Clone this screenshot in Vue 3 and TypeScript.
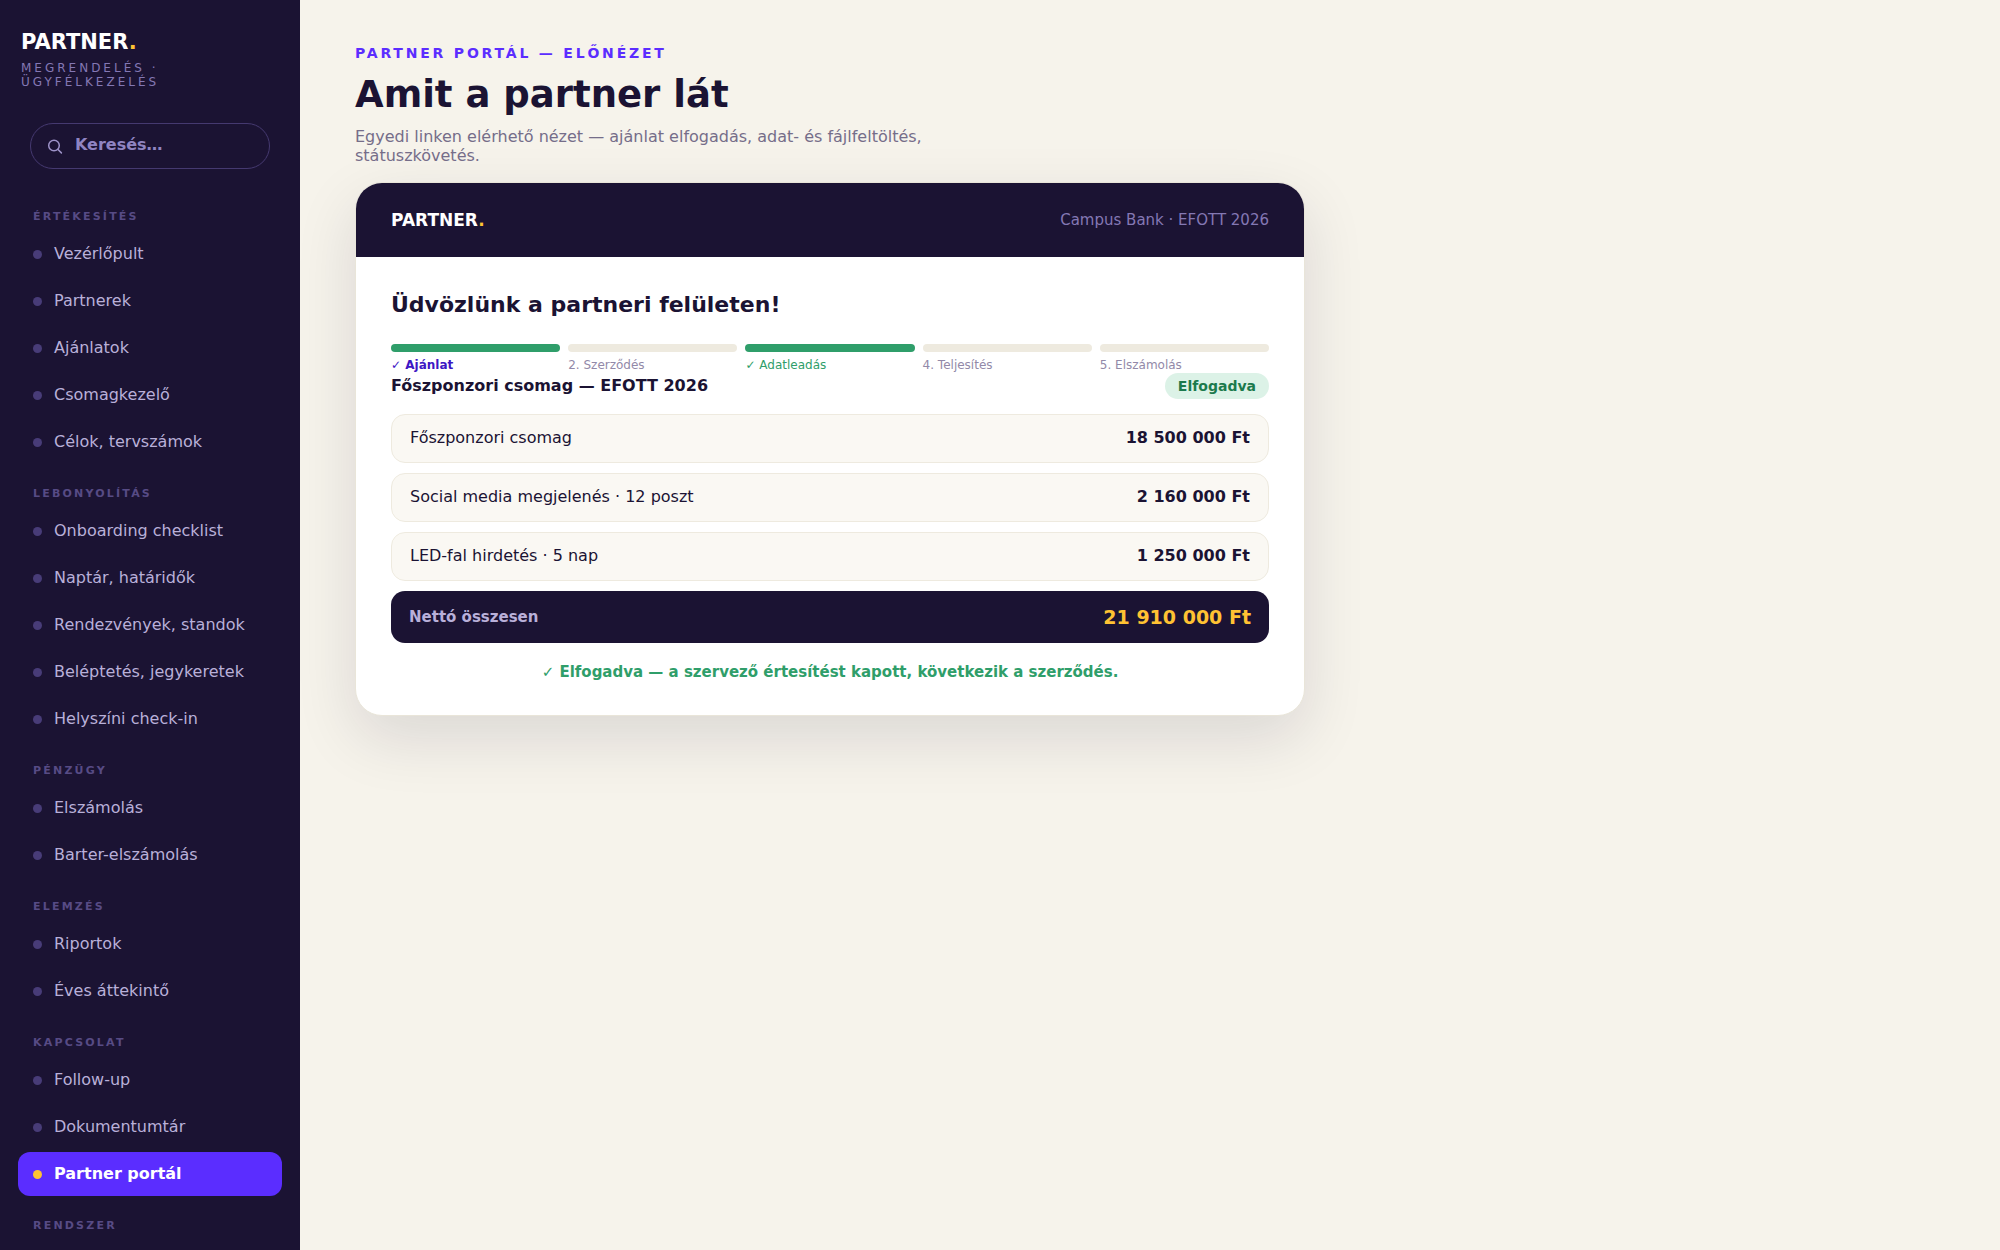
<script setup lang="ts">
interface NavGroup {
  label: string
  items: string[]
}

interface Step {
  label: string
  state: 'done' | 'current' | 'todo'
}

interface OfferLine {
  name: string
  price: string
}

const activeItem = 'Partner portál'

const groups: NavGroup[] = [
  { label: 'Értékesítés', items: ['Vezérlőpult', 'Partnerek', 'Ajánlatok', 'Csomagkezelő', 'Célok, tervszámok'] },
  {
    label: 'Lebonyolítás',
    items: ['Onboarding checklist', 'Naptár, határidők', 'Rendezvények, standok', 'Beléptetés, jegykeretek', 'Helyszíni check-in'],
  },
  { label: 'Pénzügy', items: ['Elszámolás', 'Barter-elszámolás'] },
  { label: 'Elemzés', items: ['Riportok', 'Éves áttekintő'] },
  { label: 'Kapcsolat', items: ['Follow-up', 'Dokumentumtár', 'Partner portál'] },
  { label: 'Rendszer', items: [] },
]

const steps: Step[] = [
  { label: '✓ Ajánlat', state: 'current' },
  { label: '2. Szerződés', state: 'todo' },
  { label: '✓ Adatleadás', state: 'done' },
  { label: '4. Teljesítés', state: 'todo' },
  { label: '5. Elszámolás', state: 'todo' },
]

const lines: OfferLine[] = [
  { name: 'Főszponzori csomag', price: '18 500 000 Ft' },
  { name: 'Social media megjelenés · 12 poszt', price: '2 160 000 Ft' },
  { name: 'LED-fal hirdetés · 5 nap', price: '1 250 000 Ft' },
]
</script>

<template>
  <div class="app">
    <aside class="sidebar">
      <div class="brand">
        <div class="brand-name">PARTNER<span class="dot">.</span></div>
        <div class="brand-sub">Megrendelés · Ügyfélkezelés</div>
      </div>

      <label class="search">
        <svg class="search-icon" viewBox="0 0 16 16" fill="none" aria-hidden="true">
          <circle cx="7" cy="7.5" r="5.3" stroke="currentColor" stroke-width="1.5" />
          <path d="M11 11.5l3.4 3.4" stroke="currentColor" stroke-width="1.5" stroke-linecap="round" />
        </svg>
        <input class="search-input" type="text" placeholder="Keresés…" aria-label="Keresés" />
      </label>

      <nav class="nav">
        <section v-for="group in groups" :key="group.label" class="group">
          <h2 class="group-label">{{ group.label }}</h2>
          <ul v-if="group.items.length" class="items">
            <li v-for="item in group.items" :key="item">
              <a href="#" class="item" :class="{ active: item === activeItem }">
                <span class="bullet"></span>{{ item }}
              </a>
            </li>
          </ul>
        </section>
      </nav>
    </aside>

    <main class="main">
      <header class="page-head">
        <p class="eyebrow">Partner portál — előnézet</p>
        <h1 class="title">Amit a partner lát</h1>
        <p class="lead">Egyedi linken elérhető nézet — ajánlat elfogadás, adat- és fájlfeltöltés, státuszkövetés.</p>
      </header>

      <article class="card">
        <header class="card-head">
          <div class="card-brand">PARTNER<span class="dot">.</span></div>
          <div class="card-client">Campus Bank · EFOTT 2026</div>
        </header>

        <div class="card-body">
          <h2 class="welcome">Üdvözlünk a partneri felületen!</h2>

          <ol class="steps">
            <li v-for="step in steps" :key="step.label" class="step" :class="step.state">{{ step.label }}</li>
          </ol>

          <div class="offer-head">
            <h3 class="offer-title">Főszponzori csomag — EFOTT 2026</h3>
            <span class="badge">Elfogadva</span>
          </div>

          <ul class="lines">
            <li v-for="line in lines" :key="line.name" class="line">
              <span>{{ line.name }}</span>
              <strong>{{ line.price }}</strong>
            </li>
          </ul>

          <div class="total">
            <span class="total-label">Nettó összesen</span>
            <strong class="total-value">21 910 000 Ft</strong>
          </div>

          <p class="note">✓ Elfogadva — a szervező értesítést kapott, következik a szerződés.</p>
        </div>
      </article>
    </main>
  </div>
</template>

<style>
body {
  margin: 0;
  background: #f6f3eb;
}
</style>

<style scoped>
.app {
  display: flex;
  min-height: 100vh;
  font-family: "DejaVu Sans", sans-serif;
  font-size: 16px;
  line-height: 20px;
  color: #1b1333;
}

h1, h2, h3, p, ul, ol {
  margin: 0;
  padding: 0;
}

ul, ol {
  list-style: none;
}

.dot {
  color: #ffc233;
}

.sidebar {
  box-sizing: border-box;
  flex: none;
  width: 300px;
  padding: 28px 18px 0;
  background: #1b1333;
}

.brand {
  padding: 0 3px;
}

.brand-name {
  font-size: 21px;
  line-height: 28px;
  font-weight: 700;
  color: #ffffff;
}

.brand-sub {
  margin-top: 5px;
  font-size: 12px;
  line-height: 14px;
  letter-spacing: 3px;
  text-transform: uppercase;
  color: #8478b4;
}

.search {
  display: flex;
  align-items: center;
  gap: 12px;
  box-sizing: border-box;
  height: 46px;
  margin: 34px 12px 0;
  padding: 0 16px;
  border: 1px solid #453970;
  border-radius: 23px;
  color: #9d92c8;
}

.search-icon {
  flex: none;
  width: 16px;
  height: 16px;
}

.search-input {
  flex: 1;
  min-width: 0;
  padding: 0 0 2px;
  border: 0;
  outline: 0;
  background: none;
  font: inherit;
  font-weight: 700;
  color: inherit;
}

.search-input::placeholder {
  color: #8f84c2;
  opacity: 1;
}

.nav {
  margin-top: 40px;
}

.group-label {
  padding: 0 15px;
  font-size: 11px;
  line-height: 16px;
  font-weight: 700;
  letter-spacing: 0.2em;
  text-transform: uppercase;
  color: #574b85;
}

.items {
  display: flex;
  flex-direction: column;
  gap: 3px;
  padding: 7px 0 22px;
}

.item {
  display: flex;
  align-items: center;
  gap: 12px;
  padding: 12px 15px;
  border-radius: 12px;
  color: #b9b0d9;
  text-decoration: none;
}

.bullet {
  width: 9px;
  height: 9px;
  border-radius: 50%;
  background: #483c78;
}

.item.active {
  background: #5b2dff;
  color: #ffffff;
  font-weight: 700;
}

.item.active .bullet {
  background: #ffc233;
}

.main {
  flex: 1;
  min-width: 0;
  padding: 43px 55px;
}

.page-head {
  max-width: 600px;
}

.eyebrow {
  font-size: 14px;
  line-height: 20px;
  font-weight: 700;
  letter-spacing: 0.2em;
  text-transform: uppercase;
  color: #5b2dff;
}

.title {
  margin-top: 10px;
  font-size: 37px;
  line-height: 44px;
  font-weight: 700;
}

.lead {
  margin-top: 10px;
  line-height: 19px;
  color: #756d89;
}

.card {
  box-sizing: border-box;
  max-width: 950px;
  margin-top: 17px;
  overflow: hidden;
  border: 1px solid #e9e5d9;
  border-radius: 27px;
  background: #ffffff;
  box-shadow: 0 22px 62px rgba(27, 19, 51, 0.12);
}

.card-head {
  display: flex;
  align-items: center;
  justify-content: space-between;
  padding: 27px 35px;
  background: #1b1333;
}

.card-brand {
  font-size: 17px;
  font-weight: 700;
  color: #ffffff;
}

.card-client {
  font-size: 15px;
  color: #8478b4;
}

.card-body {
  padding: 33px 35px;
}

.welcome {
  font-size: 22px;
  line-height: 30px;
  font-weight: 700;
}

.steps {
  display: flex;
  gap: 8px;
  margin-top: 24px;
}

.step {
  flex: 1;
  font-size: 12px;
  line-height: 14px;
  color: #9289a8;
}

.step::before {
  content: "";
  display: block;
  height: 8px;
  margin-bottom: 6px;
  border-radius: 4px;
  background: #eeeadf;
}

.step.done,
.step.current {
  color: #2f9e6a;
}

.step.current {
  color: #3d16c4;
  font-weight: 700;
}

.step.done::before,
.step.current::before {
  background: #2f9e6a;
}

.offer-head {
  display: flex;
  align-items: center;
  justify-content: space-between;
  margin-top: 1px;
}

.offer-title {
  font-size: 16px;
  line-height: 24px;
  font-weight: 700;
}

.badge {
  padding: 3px 13px;
  border-radius: 13px;
  background: #dcf2e7;
  font-size: 14px;
  font-weight: 700;
  color: #1c7a4d;
}

.lines {
  display: flex;
  flex-direction: column;
  gap: 10px;
  margin-top: 15px;
}

.line {
  display: flex;
  align-items: center;
  justify-content: space-between;
  padding: 13px 18px 14px;
  border: 1px solid #eeeadf;
  border-radius: 14px;
  background: #faf8f3;
}

.total {
  display: flex;
  align-items: center;
  justify-content: space-between;
  margin-top: 10px;
  padding: 16px 18px;
  border-radius: 14px;
  background: #1b1333;
}

.total-label {
  font-size: 15px;
  font-weight: 700;
  color: #b9b0d9;
}

.total-value {
  font-size: 19px;
  color: #ffc233;
}

.note {
  margin-top: 19px;
  font-size: 15px;
  font-weight: 700;
  text-align: center;
  color: #2f9e6a;
}
</style>
